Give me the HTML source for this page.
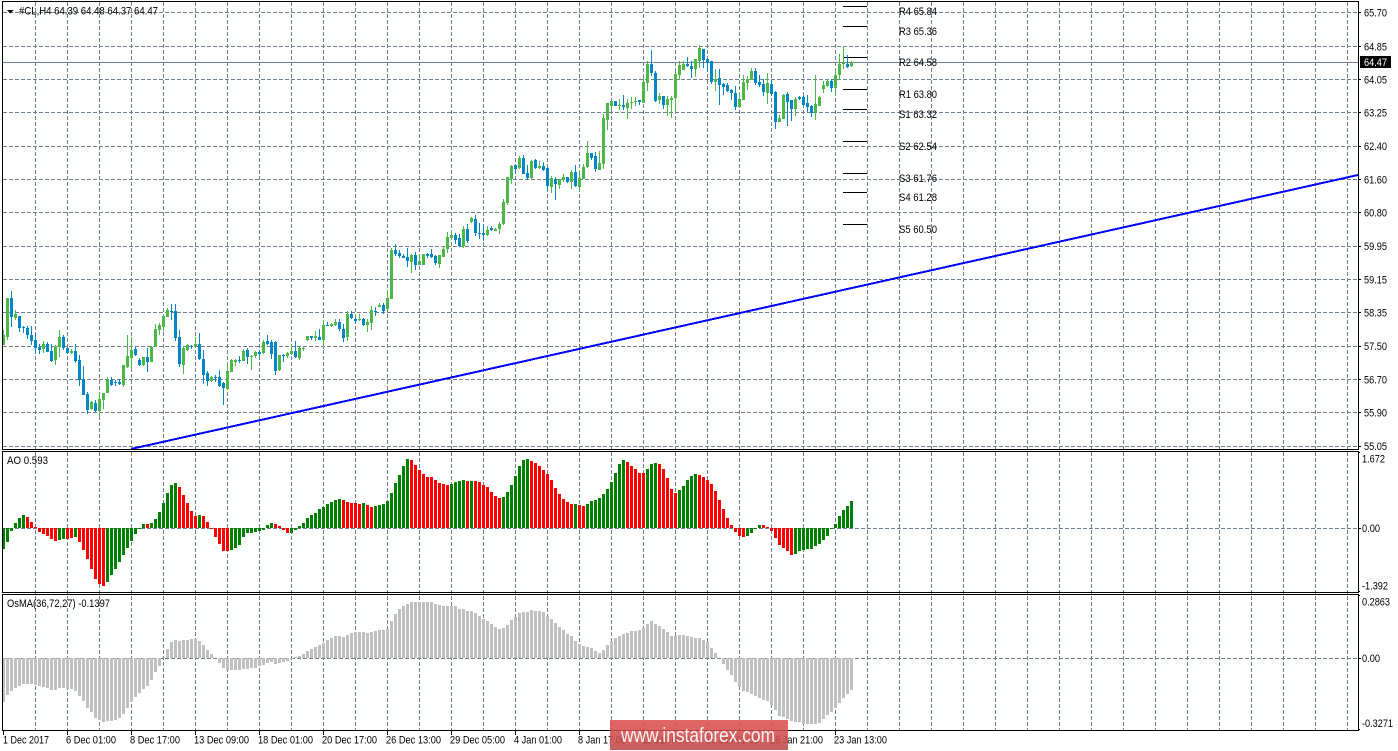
<!DOCTYPE html>
<html><head><meta charset="utf-8"><title>#CL,H4</title>
<style>
html,body{margin:0;padding:0;background:#fff;width:1398px;height:751px;overflow:hidden}
svg{display:block}
text{font-family:"Liberation Sans",sans-serif;font-size:11px;fill:#000}
</style></head><body>
<svg width="1398" height="751" viewBox="0 0 1398 751" xmlns="http://www.w3.org/2000/svg">
<defs><linearGradient id="wm" x1="0" y1="0" x2="0" y2="1"><stop offset="0" stop-color="#e05050" stop-opacity=".87"/><stop offset="1" stop-color="#c04848" stop-opacity=".87"/></linearGradient></defs>
<rect width="1398" height="751" fill="#fff"/>
<!-- grid -->
<g fill="none" stroke="#708090" stroke-width="1" stroke-dasharray="4 2" shape-rendering="crispEdges">
<path d="M3 12.5H1358M3 46.5H1358M3 79.5H1358M3 112.5H1358M3 146.5H1358M3 179.5H1358M3 212.5H1358M3 246.5H1358M3 279.5H1358M3 312.5H1358M3 346.5H1358M3 379.5H1358M3 412.5H1358M3 446.5H1358M3 528.5H1358M3 658.5H1358"/>
<path d="M35.5 2V730M67.5 2V730M99.5 2V730M131.5 2V730M163.5 2V730M195.5 2V730M227.5 2V730M259.5 2V730M291.5 2V730M323.5 2V730M355.5 2V730M387.5 2V730M419.5 2V730M451.5 2V730M483.5 2V730M515.5 2V730M547.5 2V730M579.5 2V730M611.5 2V730M643.5 2V730M675.5 2V730M707.5 2V730M739.5 2V730M771.5 2V730M803.5 2V730M835.5 2V730M867.5 2V730M899.5 2V730M931.5 2V730M963.5 2V730M995.5 2V730M1027.5 2V730M1059.5 2V730M1091.5 2V730M1123.5 2V730M1155.5 2V730M1187.5 2V730M1219.5 2V730M1251.5 2V730M1283.5 2V730M1315.5 2V730M1347.5 2V730"/>
</g>
<!-- price line -->
<path d="M3 62.5H1358" stroke="#708090" fill="none" shape-rendering="crispEdges"/>
<!-- pivot levels -->
<path d="M843 6.5H867M843 26.5H867M843 57.5H867M843 89.5H867M843 109.5H867M843 141.5H867M843 173.5H867M843 192.5H867M843 224.5H867" stroke="#000" fill="none" shape-rendering="crispEdges"/>
<!-- trendline -->
<path d="M131 449L1358 175" stroke="#0000ff" stroke-width="2" fill="none" shape-rendering="crispEdges"/>
<!-- candle wicks/bodies -->
<g fill="none" shape-rendering="crispEdges">
<path stroke="#4db848" stroke-width="1" d="M3.5 330V345M7.5 298V340M15.5 310V320M43.5 341V353M55.5 345V365M59.5 330V357M71.5 349V354M91.5 401V410M99.5 392V418M103.5 393V409M107.5 377V393M123.5 365V387M127.5 335V368M131.5 337V370M143.5 357V366M151.5 346V362M155.5 324V347M159.5 323V335M163.5 314V331M167.5 308V317M183.5 346V374M187.5 344V351M195.5 337V348M211.5 376V382M227.5 362V390M231.5 359V372M235.5 359V366M243.5 349V361M251.5 355V370M255.5 351V358M263.5 340V354M279.5 355V371M287.5 352V358M291.5 345V355M299.5 346V360M303.5 347V351M307.5 336V341M315.5 331V341M323.5 320V349M331.5 323V327M335.5 319V326M347.5 311V341M359.5 314V321M367.5 319V332M371.5 306V330M379.5 303V307M387.5 290V309M391.5 248V299M411.5 254V273M419.5 254V265M423.5 254V265M439.5 255V268M443.5 246V257M447.5 232V253M451.5 230V240M463.5 226V248M471.5 217V223M487.5 226V236M495.5 228V231M499.5 222V234M503.5 199V225M507.5 177V205M511.5 165V184M519.5 156V169M531.5 160V179M539.5 161V169M551.5 176V193M559.5 179V189M563.5 174V182M571.5 170V189M579.5 170V191M583.5 164V179M587.5 141V168M599.5 151V170M603.5 114V169M607.5 103V130M611.5 101V110M619.5 99V110M627.5 99V119M631.5 97V109M635.5 97V106M643.5 78V103M647.5 61V91M659.5 93V104M667.5 96V116M671.5 96V118M675.5 72V112M679.5 61V80M683.5 61V70M695.5 59V77M699.5 45V68M715.5 69V91M739.5 92V108M743.5 75V100M747.5 76V90M751.5 68V80M767.5 73V104M779.5 115V122M783.5 94V119M795.5 97V116M815.5 75V120M819.5 96V106M823.5 81V93M827.5 79V87M835.5 71V95M839.5 54V80M843.5 46V69M851.5 61V67"/>
<path stroke="#4db848" stroke-width="3" d="M3.5 335V345M7.5 298V337M15.5 314V318M43.5 344V349M55.5 346V360M59.5 337V347M71.5 351V353M91.5 402V409M99.5 399V411M103.5 393V400M107.5 379V393M123.5 365V385M127.5 356V367M131.5 350V358M143.5 357V365M151.5 347V362M155.5 329V347M159.5 325V330M163.5 316V327M167.5 310V317M183.5 348V365M187.5 345V350M195.5 344V347M211.5 377V381M227.5 371V389M231.5 360V372M235.5 360V362M243.5 351V361M251.5 356V357M255.5 352V356M263.5 342V353M279.5 355V370M287.5 353V356M291.5 351V354M299.5 348V358M303.5 348V349M307.5 336V340M315.5 336V338M323.5 325V340M331.5 324V326M335.5 322V325M347.5 314V337M359.5 319V320M367.5 322V325M371.5 310V323M379.5 305V307M387.5 298V309M391.5 250V299M411.5 255V262M419.5 261V265M423.5 254V265M439.5 255V264M443.5 249V257M447.5 237V249M451.5 235V238M463.5 229V246M471.5 218V222M487.5 230V235M495.5 229V231M499.5 224V229M503.5 202V224M507.5 177V203M511.5 166V179M519.5 158V168M531.5 161V178M539.5 166V168M551.5 178V187M559.5 179V185M563.5 177V180M571.5 172V182M579.5 178V187M583.5 167V179M587.5 153V167M599.5 163V170M603.5 118V164M607.5 103V120M611.5 101V106M619.5 105V106M627.5 103V108M631.5 102V103M635.5 101V102M643.5 82V103M647.5 64V83M659.5 96V100M667.5 99V105M671.5 98V100M675.5 74V98M679.5 65V75M683.5 64V70M695.5 59V69M699.5 48V61M715.5 79V82M739.5 99V107M743.5 82V100M747.5 79V83M751.5 71V80M767.5 83V93M779.5 118V122M783.5 95V119M795.5 99V109M815.5 104V113M819.5 97V106M823.5 85V89M827.5 81V86M835.5 75V88M839.5 64V75M843.5 62V64M851.5 62V66"/>
<path stroke="#0086c4" stroke-width="1" d="M11.5 291V327M19.5 316V332M23.5 326V333M27.5 326V339M31.5 326V345M35.5 333V353M39.5 344V354M47.5 342V352M51.5 344V362M63.5 335V350M67.5 348V354M75.5 344V363M79.5 355V386M83.5 366V395M87.5 392V414M95.5 400V412M111.5 377V386M115.5 380V386M119.5 379V385M135.5 347V356M139.5 358V366M147.5 348V372M171.5 304V320M175.5 304V341M179.5 330V367M191.5 345V349M199.5 333V360M203.5 350V384M207.5 371V386M215.5 375V382M219.5 370V387M223.5 382V405M239.5 356V363M247.5 348V364M259.5 350V356M267.5 335V345M271.5 340V359M275.5 341V375M283.5 354V362M295.5 341V358M311.5 336V340M319.5 329V340M327.5 322V326M339.5 319V331M343.5 324V342M351.5 311V319M355.5 318V323M363.5 318V326M375.5 307V316M383.5 303V314M395.5 244V256M399.5 250V258M403.5 254V258M407.5 248V267M415.5 252V270M427.5 253V258M431.5 249V258M435.5 255V265M455.5 233V244M459.5 234V247M467.5 224V243M475.5 215V236M479.5 223V239M483.5 224V241M491.5 226V231M515.5 165V174M523.5 155V174M527.5 165V180M535.5 159V169M543.5 162V171M547.5 168V191M555.5 177V200M567.5 177V183M575.5 165V187M591.5 153V160M595.5 152V172M615.5 101V106M623.5 95V110M639.5 100V105M651.5 50V76M655.5 71V102M663.5 96V109M687.5 57V67M691.5 61V78M703.5 49V68M707.5 59V72M711.5 61V84M719.5 69V105M723.5 83V95M727.5 83V92M731.5 89V100M735.5 86V110M755.5 68V85M759.5 75V87M763.5 79V96M771.5 80V95M775.5 91V129M787.5 92V126M791.5 100V121M799.5 96V100M803.5 96V106M807.5 95V112M811.5 105V117M831.5 79V92M847.5 55V68"/>
<path stroke="#0086c4" stroke-width="3" d="M11.5 298V317M19.5 316V328M23.5 327V328M27.5 328V335M31.5 335V341M35.5 340V348M39.5 347V350M47.5 344V352M51.5 351V361M63.5 337V348M67.5 348V353M75.5 351V361M79.5 360V380M83.5 379V395M87.5 394V410M95.5 403V411M111.5 380V385M115.5 382V383M119.5 382V384M135.5 349V355M139.5 360V365M147.5 357V362M171.5 311V312M175.5 311V338M179.5 337V364M191.5 346V347M199.5 344V359M203.5 359V375M207.5 373V381M215.5 377V378M219.5 377V386M223.5 383V388M239.5 360V361M247.5 350V357M259.5 352V354M267.5 341V344M271.5 342V354M275.5 342V371M283.5 355V356M295.5 351V357M311.5 336V338M319.5 337V340M327.5 325V326M339.5 322V329M343.5 329V338M351.5 314V318M355.5 319V321M363.5 319V325M375.5 311V312M383.5 305V311M395.5 250V254M399.5 253V256M403.5 256V258M407.5 257V261M415.5 255V265M427.5 254V256M431.5 254V257M435.5 256V263M455.5 235V240M459.5 238V246M467.5 229V241M475.5 219V233M479.5 233V234M483.5 233V235M491.5 228V230M515.5 165V169M523.5 158V174M527.5 173V178M535.5 160V168M543.5 166V170M547.5 168V186M555.5 179V184M567.5 177V182M575.5 172V186M591.5 153V158M595.5 156V169M615.5 101V106M623.5 105V107M639.5 100V102M651.5 64V73M655.5 73V101M663.5 96V105M687.5 64V66M691.5 66V69M703.5 49V60M707.5 59V63M711.5 61V82M719.5 78V85M723.5 84V87M727.5 85V91M731.5 90V93M735.5 93V107M755.5 71V83M759.5 82V85M763.5 84V92M771.5 84V94M775.5 92V122M787.5 94V102M791.5 100V109M799.5 97V99M803.5 97V105M807.5 103V107M811.5 106V113M831.5 81V88M847.5 64V67"/>
</g>
<!-- AO -->
<g fill="none" stroke-width="3" shape-rendering="crispEdges">
<path stroke="#008000" d="M3.5 528V549M7.5 528V542M11.5 528V531M15.5 528V523M19.5 528V518M23.5 528V515M59.5 528V540M63.5 528V539M75.5 528V537M107.5 528V582M111.5 528V575M115.5 528V569M119.5 528V562M123.5 528V555M127.5 528V548M131.5 528V541M135.5 528V534M139.5 528V529M143.5 528V524M151.5 528V523M155.5 528V519M159.5 528V512M163.5 528V503M167.5 528V493M171.5 528V485M175.5 528V483M199.5 528V515M231.5 528V550M235.5 528V548M239.5 528V545M243.5 528V537M247.5 528V533M251.5 528V533M255.5 528V532M259.5 528V531M263.5 528V530M267.5 528V525M271.5 528V523M291.5 528V533M295.5 528V530M299.5 528V526M303.5 528V523M307.5 528V518M311.5 528V515M315.5 528V513M319.5 528V509M323.5 528V507M327.5 528V504M331.5 528V502M335.5 528V500M339.5 528V499M363.5 528V503M375.5 528V506M379.5 528V505M383.5 528V504M387.5 528V501M391.5 528V493M395.5 528V483M399.5 528V475M403.5 528V466M407.5 528V459M451.5 528V484M455.5 528V482M459.5 528V481M463.5 528V480M471.5 528V481M503.5 528V497M507.5 528V492M511.5 528V485M515.5 528V476M519.5 528V466M523.5 528V460M527.5 528V459M575.5 528V504M587.5 528V504M591.5 528V501M595.5 528V500M599.5 528V498M603.5 528V494M607.5 528V489M611.5 528V482M615.5 528V473M619.5 528V464M623.5 528V460M647.5 528V469M651.5 528V464M655.5 528V463M679.5 528V490M683.5 528V486M687.5 528V480M691.5 528V476M695.5 528V474M747.5 528V536M751.5 528V533M755.5 528V529M759.5 528V525M795.5 528V554M799.5 528V551M803.5 528V550M807.5 528V549M811.5 528V549M815.5 528V546M819.5 528V544M823.5 528V540M827.5 528V536M831.5 528V529M835.5 528V524M839.5 528V516M843.5 528V510M847.5 528V506M851.5 528V501"/>
<path stroke="#ff0000" d="M27.5 528V517M31.5 528V522M35.5 528V527M39.5 528V532M43.5 528V534M47.5 528V536M51.5 528V539M55.5 528V541M67.5 528V539M71.5 528V538M79.5 528V542M83.5 528V550M87.5 528V559M91.5 528V569M95.5 528V579M99.5 528V584M103.5 528V586M147.5 528V524M179.5 528V487M183.5 528V495M187.5 528V503M191.5 528V511M195.5 528V516M203.5 528V516M207.5 528V522M211.5 528V529M215.5 528V537M219.5 528V544M223.5 528V551M227.5 528V551M275.5 528V524M279.5 528V526M283.5 528V530M287.5 528V533M343.5 528V500M347.5 528V502M351.5 528V503M355.5 528V503M359.5 528V504M367.5 528V505M371.5 528V507M411.5 528V460M415.5 528V465M419.5 528V470M423.5 528V474M427.5 528V477M431.5 528V477M435.5 528V480M439.5 528V483M443.5 528V484M447.5 528V485M467.5 528V481M475.5 528V481M479.5 528V482M483.5 528V485M487.5 528V487M491.5 528V492M495.5 528V496M499.5 528V498M531.5 528V461M535.5 528V463M539.5 528V466M543.5 528V470M547.5 528V474M551.5 528V480M555.5 528V488M559.5 528V494M563.5 528V499M567.5 528V502M571.5 528V504M579.5 528V505M583.5 528V506M627.5 528V462M631.5 528V466M635.5 528V469M639.5 528V473M643.5 528V473M659.5 528V464M663.5 528V469M667.5 528V478M671.5 528V489M675.5 528V493M699.5 528V475M703.5 528V477M707.5 528V480M711.5 528V484M715.5 528V491M719.5 528V500M723.5 528V509M727.5 528V518M731.5 528V525M735.5 528V532M739.5 528V536M743.5 528V537M763.5 528V525M767.5 528V527M771.5 528V531M775.5 528V538M779.5 528V545M783.5 528V548M787.5 528V551M791.5 528V555"/>
<!-- OsMA -->
<path stroke="#c0c0c0" d="M3.5 658V702M7.5 658V695M11.5 658V691M15.5 658V688M19.5 658V686M23.5 658V684M27.5 658V684M31.5 658V684M35.5 658V685M39.5 658V686M43.5 658V687M47.5 658V688M51.5 658V690M55.5 658V690M59.5 658V688M63.5 658V688M67.5 658V689M71.5 658V689M75.5 658V691M79.5 658V696M83.5 658V701M87.5 658V708M91.5 658V712M95.5 658V718M99.5 658V720M103.5 658V722M107.5 658V721M111.5 658V721M115.5 658V720M119.5 658V718M123.5 658V714M127.5 658V708M131.5 658V702M135.5 658V697M139.5 658V693M143.5 658V689M147.5 658V686M151.5 658V680M155.5 658V672M159.5 658V666M163.5 658V657M167.5 658V649M171.5 658V642M175.5 658V640M179.5 658V641M183.5 658V640M187.5 658V640M191.5 658V639M195.5 658V639M199.5 658V641M203.5 658V645M207.5 658V650M211.5 658V654M219.5 658V663M223.5 658V668M227.5 658V670M231.5 658V670M235.5 658V670M239.5 658V670M243.5 658V669M247.5 658V669M251.5 658V668M255.5 658V668M259.5 658V666M263.5 658V665M267.5 658V663M271.5 658V662M275.5 658V664M279.5 658V663M283.5 658V662M287.5 658V661M291.5 658V659M295.5 658V657M299.5 658V656M303.5 658V654M307.5 658V651M311.5 658V649M315.5 658V647M319.5 658V645M323.5 658V643M327.5 658V640M331.5 658V638M335.5 658V636M339.5 658V636M343.5 658V637M347.5 658V635M351.5 658V633M355.5 658V632M359.5 658V632M363.5 658V632M367.5 658V633M371.5 658V632M375.5 658V631M379.5 658V630M383.5 658V630M387.5 658V629M391.5 658V621M395.5 658V614M399.5 658V609M403.5 658V606M407.5 658V604M411.5 658V602M415.5 658V602M419.5 658V602M423.5 658V602M427.5 658V602M431.5 658V602M435.5 658V604M439.5 658V605M443.5 658V606M447.5 658V606M451.5 658V606M455.5 658V606M459.5 658V609M463.5 658V609M467.5 658V611M471.5 658V611M475.5 658V613M479.5 658V616M483.5 658V619M487.5 658V621M491.5 658V624M495.5 658V627M499.5 658V629M503.5 658V628M507.5 658V625M511.5 658V620M515.5 658V617M519.5 658V613M523.5 658V612M527.5 658V612M531.5 658V610M535.5 658V611M539.5 658V611M543.5 658V612M547.5 658V616M551.5 658V619M555.5 658V623M559.5 658V627M563.5 658V630M567.5 658V634M571.5 658V636M575.5 658V641M579.5 658V644M583.5 658V646M587.5 658V647M591.5 658V648M595.5 658V651M599.5 658V653M603.5 658V650M607.5 658V645M611.5 658V641M615.5 658V638M619.5 658V636M623.5 658V634M627.5 658V633M631.5 658V631M635.5 658V631M639.5 658V630M643.5 658V628M647.5 658V624M651.5 658V621M655.5 658V624M659.5 658V626M663.5 658V629M667.5 658V632M671.5 658V636M675.5 658V636M679.5 658V635M683.5 658V635M687.5 658V636M691.5 658V637M695.5 658V638M699.5 658V638M703.5 658V640M707.5 658V642M711.5 658V648M715.5 658V653M723.5 658V664M727.5 658V670M731.5 658V675M735.5 658V682M739.5 658V687M743.5 658V691M747.5 658V692M751.5 658V694M755.5 658V696M759.5 658V698M763.5 658V700M767.5 658V701M771.5 658V705M775.5 658V710M779.5 658V716M783.5 658V717M787.5 658V719M791.5 658V721M795.5 658V722M799.5 658V722M803.5 658V724M807.5 658V724M811.5 658V724M815.5 658V724M819.5 658V723M823.5 658V719M827.5 658V715M831.5 658V712M835.5 658V708M839.5 658V703M843.5 658V698M847.5 658V694M851.5 658V690"/>
</g>
<!-- frames -->
<g fill="none" stroke="#000" stroke-width="1" shape-rendering="crispEdges">
<path d="M2.5 1.5H1358.5V449.5H2.5ZM2.5 451.5H1358.5V592.5H2.5ZM2.5 594.5H1358.5V730.5H2.5Z"/>
<path d="M1358 12.5h3M1358 46.5h3M1358 79.5h3M1358 112.5h3M1358 146.5h3M1358 179.5h3M1358 212.5h3M1358 246.5h3M1358 279.5h3M1358 312.5h3M1358 346.5h3M1358 379.5h3M1358 412.5h3M1358 446.5h3M1358 452.5h2M1358 528.5h3M1358 591.5h2M1358 595.5h2M1358 658.5h3M1358 729.5h2"/>
<path d="M3.5 730V735M67.5 730V735M131.5 730V735M195.5 730V735M259.5 730V735M323.5 730V735M387.5 730V735M451.5 730V735M515.5 730V735M579.5 730V735M643.5 730V735M707.5 730V735M771.5 730V735M835.5 730V735"/>
</g>
<!-- legend -->
<path d="M7 10h6.500l-3.200 3.500z" fill="#000"/>
<text x="19" y="14.500" textLength="139" lengthAdjust="spacingAndGlyphs">#CL,H4  64.39 64.48 64.37 64.47</text>
<text x="7" y="464" textLength="41" lengthAdjust="spacingAndGlyphs">AO 0.593</text>
<text x="7" y="607" textLength="103" lengthAdjust="spacingAndGlyphs">OsMA(36,72,27) -0.1397</text>
<!-- pivot labels -->
<g fill="#222">
<text x="899" y="15" textLength="38" lengthAdjust="spacingAndGlyphs">R4 65.84</text>
<text x="899" y="35" textLength="38" lengthAdjust="spacingAndGlyphs">R3 65.36</text>
<text x="899" y="66" textLength="38" lengthAdjust="spacingAndGlyphs">R2 64.58</text>
<text x="899" y="98" textLength="38" lengthAdjust="spacingAndGlyphs">R1 63.80</text>
<text x="899" y="118" textLength="38" lengthAdjust="spacingAndGlyphs">S1 63.32</text>
<text x="899" y="150" textLength="38" lengthAdjust="spacingAndGlyphs">S2 62.54</text>
<text x="899" y="182" textLength="38" lengthAdjust="spacingAndGlyphs">S3 61.76</text>
<text x="899" y="201" textLength="38" lengthAdjust="spacingAndGlyphs">S4 61.28</text>
<text x="899" y="233" textLength="38" lengthAdjust="spacingAndGlyphs">S5 60.50</text>
</g>
<!-- price axis -->
<g>
<text x="1364" y="16.500" textLength="23" lengthAdjust="spacingAndGlyphs">65.70</text>
<text x="1364" y="50.500" textLength="23" lengthAdjust="spacingAndGlyphs">64.85</text>
<text x="1364" y="83.500" textLength="23" lengthAdjust="spacingAndGlyphs">64.05</text>
<text x="1364" y="116.500" textLength="23" lengthAdjust="spacingAndGlyphs">63.25</text>
<text x="1364" y="150" textLength="23" lengthAdjust="spacingAndGlyphs">62.40</text>
<text x="1364" y="183.500" textLength="23" lengthAdjust="spacingAndGlyphs">61.60</text>
<text x="1364" y="216.500" textLength="23" lengthAdjust="spacingAndGlyphs">60.80</text>
<text x="1364" y="250" textLength="23" lengthAdjust="spacingAndGlyphs">59.95</text>
<text x="1364" y="283.500" textLength="23" lengthAdjust="spacingAndGlyphs">59.15</text>
<text x="1364" y="316.500" textLength="23" lengthAdjust="spacingAndGlyphs">58.35</text>
<text x="1364" y="350" textLength="23" lengthAdjust="spacingAndGlyphs">57.50</text>
<text x="1364" y="383.500" textLength="23" lengthAdjust="spacingAndGlyphs">56.70</text>
<text x="1364" y="416.500" textLength="23" lengthAdjust="spacingAndGlyphs">55.90</text>
<text x="1364" y="450" textLength="23" lengthAdjust="spacingAndGlyphs">55.05</text>
<rect x="1360" y="56" width="31" height="12" fill="#000"/>
<text x="1364" y="66" textLength="23" lengthAdjust="spacingAndGlyphs" style="fill:#fff">64.47</text>
<text x="1362" y="462.500" textLength="23" lengthAdjust="spacingAndGlyphs">1.672</text>
<text x="1362" y="532" textLength="18" lengthAdjust="spacingAndGlyphs">0.00</text>
<text x="1362" y="589.500" textLength="26" lengthAdjust="spacingAndGlyphs">-1.392</text>
<text x="1362" y="605.500" textLength="28" lengthAdjust="spacingAndGlyphs">0.2863</text>
<text x="1362" y="662" textLength="18" lengthAdjust="spacingAndGlyphs">0.00</text>
<text x="1362" y="727" textLength="31" lengthAdjust="spacingAndGlyphs">-0.3271</text>
</g>
<!-- time axis -->
<g>
<text x="3" y="743.500" textLength="46" lengthAdjust="spacingAndGlyphs">1 Dec 2017</text>
<text x="66" y="743.500" textLength="50" lengthAdjust="spacingAndGlyphs">6 Dec 01:00</text>
<text x="130" y="743.500" textLength="50" lengthAdjust="spacingAndGlyphs">8 Dec 17:00</text>
<text x="194" y="743.500" textLength="55" lengthAdjust="spacingAndGlyphs">13 Dec 09:00</text>
<text x="258" y="743.500" textLength="55" lengthAdjust="spacingAndGlyphs">18 Dec 01:00</text>
<text x="322" y="743.500" textLength="55" lengthAdjust="spacingAndGlyphs">20 Dec 17:00</text>
<text x="386" y="743.500" textLength="55" lengthAdjust="spacingAndGlyphs">26 Dec 13:00</text>
<text x="450" y="743.500" textLength="55" lengthAdjust="spacingAndGlyphs">29 Dec 05:00</text>
<text x="514" y="743.500" textLength="48" lengthAdjust="spacingAndGlyphs">4 Jan 01:00</text>
<text x="578" y="743.500" textLength="48" lengthAdjust="spacingAndGlyphs">8 Jan 17:00</text>
<text x="642" y="743.500" textLength="53" lengthAdjust="spacingAndGlyphs">11 Jan 09:00</text>
<text x="706" y="743.500" textLength="53" lengthAdjust="spacingAndGlyphs">16 Jan 01:00</text>
<text x="770" y="743.500" textLength="53" lengthAdjust="spacingAndGlyphs">18 Jan 21:00</text>
<text x="834" y="743.500" textLength="53" lengthAdjust="spacingAndGlyphs">23 Jan 13:00</text>
</g>
<!-- watermark -->
<rect x="610" y="720" width="178" height="30" fill="url(#wm)"/>
<text x="621" y="742" textLength="154" lengthAdjust="spacingAndGlyphs" style="font-size:20px;fill:#fff;fill-opacity:.92">www.instaforex.com</text>
</svg>
</body></html>
